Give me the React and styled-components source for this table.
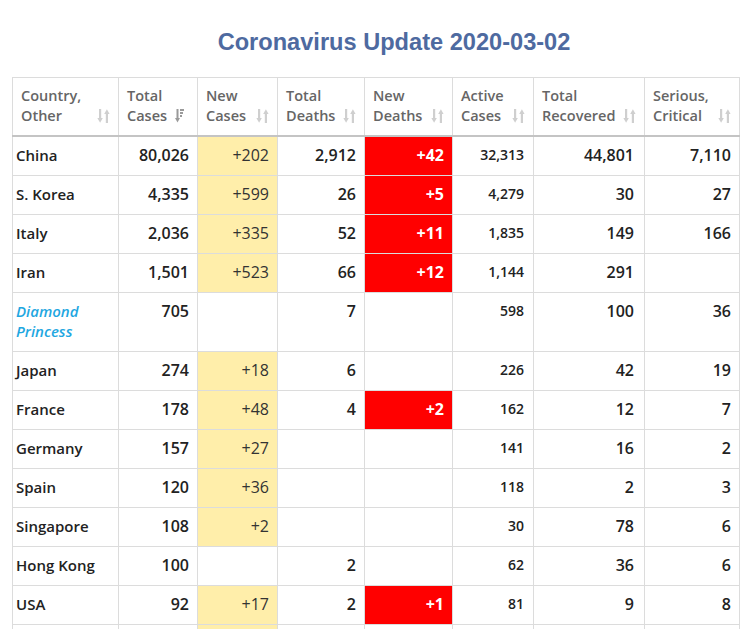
import React from "react";
import styled, { createGlobalStyle } from "styled-components";

const Global = createGlobalStyle`
  html, body { margin: 0; padding: 0; background: #fff; }
  body { font-family: "Open Sans", "Noto Sans", Arial, sans-serif; color: #222; }
`;

const Page = styled.div`
  padding: 0 0 0 12px;
`;

const Title = styled.h1`
  margin: 0;
  padding: 28px 0 0 29px;
  height: 49px;
  text-align: center;
  font-family: "Liberation Sans", Arial, sans-serif;
  font-weight: 700;
  font-size: 23.6px;
  line-height: 28px;
  color: #4e6aa0;
`;

const Table = styled.table`
  border-collapse: collapse;
  table-layout: fixed;
  width: 727px;
`;

const Th = styled.th`
  border: 1px solid #dcdcdc;
  border-bottom: 2px solid #c4c4c4;
  padding: 8px 8px 10px 8px;
  text-align: left;
  vertical-align: top;
  font-size: 14.5px;
  font-weight: 600;
  line-height: 19.5px;
  color: #666;
`;

const HeadInner = styled.div`
  display: flex;
  align-items: flex-end;
  justify-content: space-between;
  gap: 2px;
`;

const SortIcon = styled.svg`
  flex: none;
  margin-bottom: 2px;
  margin-right: ${(p) => (p.$sorted ? "5px" : "0")};
`;

const Td = styled.td`
  border: 1px solid #dcdcdc;
  padding: 8px 8px 10px 8px;
  vertical-align: top;
  line-height: 20px;
  text-align: right;
  font-size: 16px;
  font-weight: 600;
  color: #222;
  white-space: nowrap;
`;

const CountryTd = styled(Td)`
  text-align: left;
  padding-left: 3px;
  font-size: 15px;
  white-space: normal;
  color: ${(p) => (p.$ship ? "#1fa7e1" : "#222")};
  font-style: ${(p) => (p.$ship ? "italic" : "normal")};
`;

const NewCasesTd = styled(Td)`
  background: ${(p) => (p.$hl ? "#ffeeaa" : "transparent")};
  font-weight: 400;
  color: #333;
`;

const NewDeathsTd = styled(Td)`
  background: ${(p) => (p.$hl ? "#ff0000" : "transparent")};
  color: #fff;
  font-weight: 700;
`;

const ActiveTd = styled(Td)`
  font-size: 14px;
  padding-right: 9px;
`;

const RecoveredTd = styled(Td)`
  padding-right: 10px;
`;

function Sort({ sorted }) {
  if (sorted) {
    return (
      <SortIcon $sorted width="9" height="14" viewBox="0 0 9 14">
        <g fill="#9a9a9a">
          <rect x="1.5" y="0" width="2" height="10" />
          <polygon points="0,9 5,9 2.5,13.5" />
          <rect x="5" y="0" width="4" height="2" />
          <rect x="5" y="3" width="3" height="2" />
          <rect x="5" y="6" width="2" height="2" />
        </g>
      </SortIcon>
    );
  }
  return (
    <SortIcon width="13" height="14" viewBox="0 0 13 14">
      <g fill="#cfcfcf">
        <rect x="2" y="0" width="2.2" height="10" />
        <polygon points="0.4,9 5.8,9 3.1,13.8" />
        <rect x="8.8" y="4" width="2.2" height="10" />
        <polygon points="7.2,5 12.6,5 9.9,0.2" />
      </g>
    </SortIcon>
  );
}

const headers = [
  ["Country,", "Other"],
  ["Total", "Cases", true],
  ["New", "Cases"],
  ["Total", "Deaths"],
  ["New", "Deaths"],
  ["Active", "Cases"],
  ["Total", "Recovered"],
  ["Serious,", "Critical"],
];

const widths = [106, 79, 80, 87, 88, 81, 111, 95];

const rows = [
  ["China", "80,026", "+202", "2,912", "+42", "32,313", "44,801", "7,110"],
  ["S. Korea", "4,335", "+599", "26", "+5", "4,279", "30", "27"],
  ["Italy", "2,036", "+335", "52", "+11", "1,835", "149", "166"],
  ["Iran", "1,501", "+523", "66", "+12", "1,144", "291", ""],
  ["Diamond Princess", "705", "", "7", "", "598", "100", "36", true],
  ["Japan", "274", "+18", "6", "", "226", "42", "19"],
  ["France", "178", "+48", "4", "+2", "162", "12", "7"],
  ["Germany", "157", "+27", "", "", "141", "16", "2"],
  ["Spain", "120", "+36", "", "", "118", "2", "3"],
  ["Singapore", "108", "+2", "", "", "30", "78", "6"],
  ["Hong Kong", "100", "", "2", "", "62", "36", "6"],
  ["USA", "92", "+17", "2", "+1", "81", "9", "8"],
];

export default function App() {
  return (
    <>
      <Global />
      <Page>
        <Title>Coronavirus Update 2020-03-02</Title>
        <Table>
          <colgroup>
            {widths.map((w, i) => (
              <col key={i} style={{ width: w }} />
            ))}
          </colgroup>
          <thead>
            <tr>
              {headers.map(([a, b, sorted], i) => (
                <Th key={i}>
                  <HeadInner>
                    <span>
                      {a}
                      <br />
                      {b}
                    </span>
                    <Sort sorted={sorted} />
                  </HeadInner>
                </Th>
              ))}
            </tr>
          </thead>
          <tbody>
            {rows.map((r) => (
              <tr key={r[0]}>
                <CountryTd $ship={r[8]}>{r[0]}</CountryTd>
                <Td>{r[1]}</Td>
                <NewCasesTd $hl={!!r[2]}>{r[2]}</NewCasesTd>
                <Td>{r[3]}</Td>
                <NewDeathsTd $hl={!!r[4]}>{r[4]}</NewDeathsTd>
                <ActiveTd>{r[5]}</ActiveTd>
                <RecoveredTd>{r[6]}</RecoveredTd>
                <Td>{r[7]}</Td>
              </tr>
            ))}
            <tr>
              <CountryTd>&nbsp;</CountryTd>
              <Td />
              <NewCasesTd $hl />
              <Td />
              <NewDeathsTd />
              <ActiveTd />
              <RecoveredTd />
              <Td />
            </tr>
          </tbody>
        </Table>
      </Page>
    </>
  );
}
